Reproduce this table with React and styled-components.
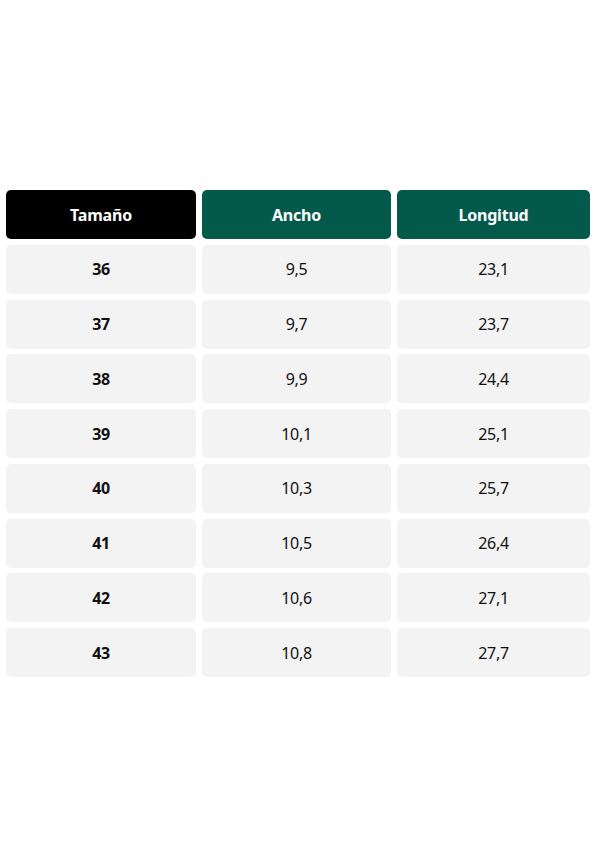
import React from "react";
import styled, { createGlobalStyle } from "styled-components";

const Global = createGlobalStyle`
  html, body { margin: 0; padding: 0; background: #fff; }
  body { font-family: "Noto Sans", "Lato", sans-serif; }
`;

const Page = styled.div`
  width: 600px;
  height: 861px;
  box-sizing: border-box;
  padding: 190px 10px 0 6px;
`;

const Grid = styled.div`
  display: grid;
  grid-template-columns: 190px 189px 193px;
  column-gap: 6px;
  row-gap: 5.75px;
  grid-auto-rows: 49px;
`;

const Head = styled.div`
  background: ${(p) => (p.$dark ? "#000000" : "#03594a")};
  color: #fff;
  border-radius: 5px;
  display: flex;
  align-items: center;
  justify-content: center;
  font-weight: 700;
  font-size: 16px;
  letter-spacing: -0.2px;
`;

const Cell = styled.div`
  background: #f3f3f3;
  color: #111;
  border-radius: 5px;
  display: flex;
  align-items: center;
  justify-content: center;
  font-size: 16px;
  font-weight: ${(p) => (p.$bold ? 700 : 400)};
  letter-spacing: -0.3px;
`;

const rows = [
  ["36", "9,5", "23,1"],
  ["37", "9,7", "23,7"],
  ["38", "9,9", "24,4"],
  ["39", "10,1", "25,1"],
  ["40", "10,3", "25,7"],
  ["41", "10,5", "26,4"],
  ["42", "10,6", "27,1"],
  ["43", "10,8", "27,7"],
];

export default function App() {
  return (
    <>
      <Global />
      <Page>
        <Grid>
          <Head $dark>Tamaño</Head>
          <Head>Ancho</Head>
          <Head>Longitud</Head>
          {rows.map((r) => (
            <React.Fragment key={r[0]}>
              <Cell $bold>{r[0]}</Cell>
              <Cell>{r[1]}</Cell>
              <Cell>{r[2]}</Cell>
            </React.Fragment>
          ))}
        </Grid>
      </Page>
    </>
  );
}
